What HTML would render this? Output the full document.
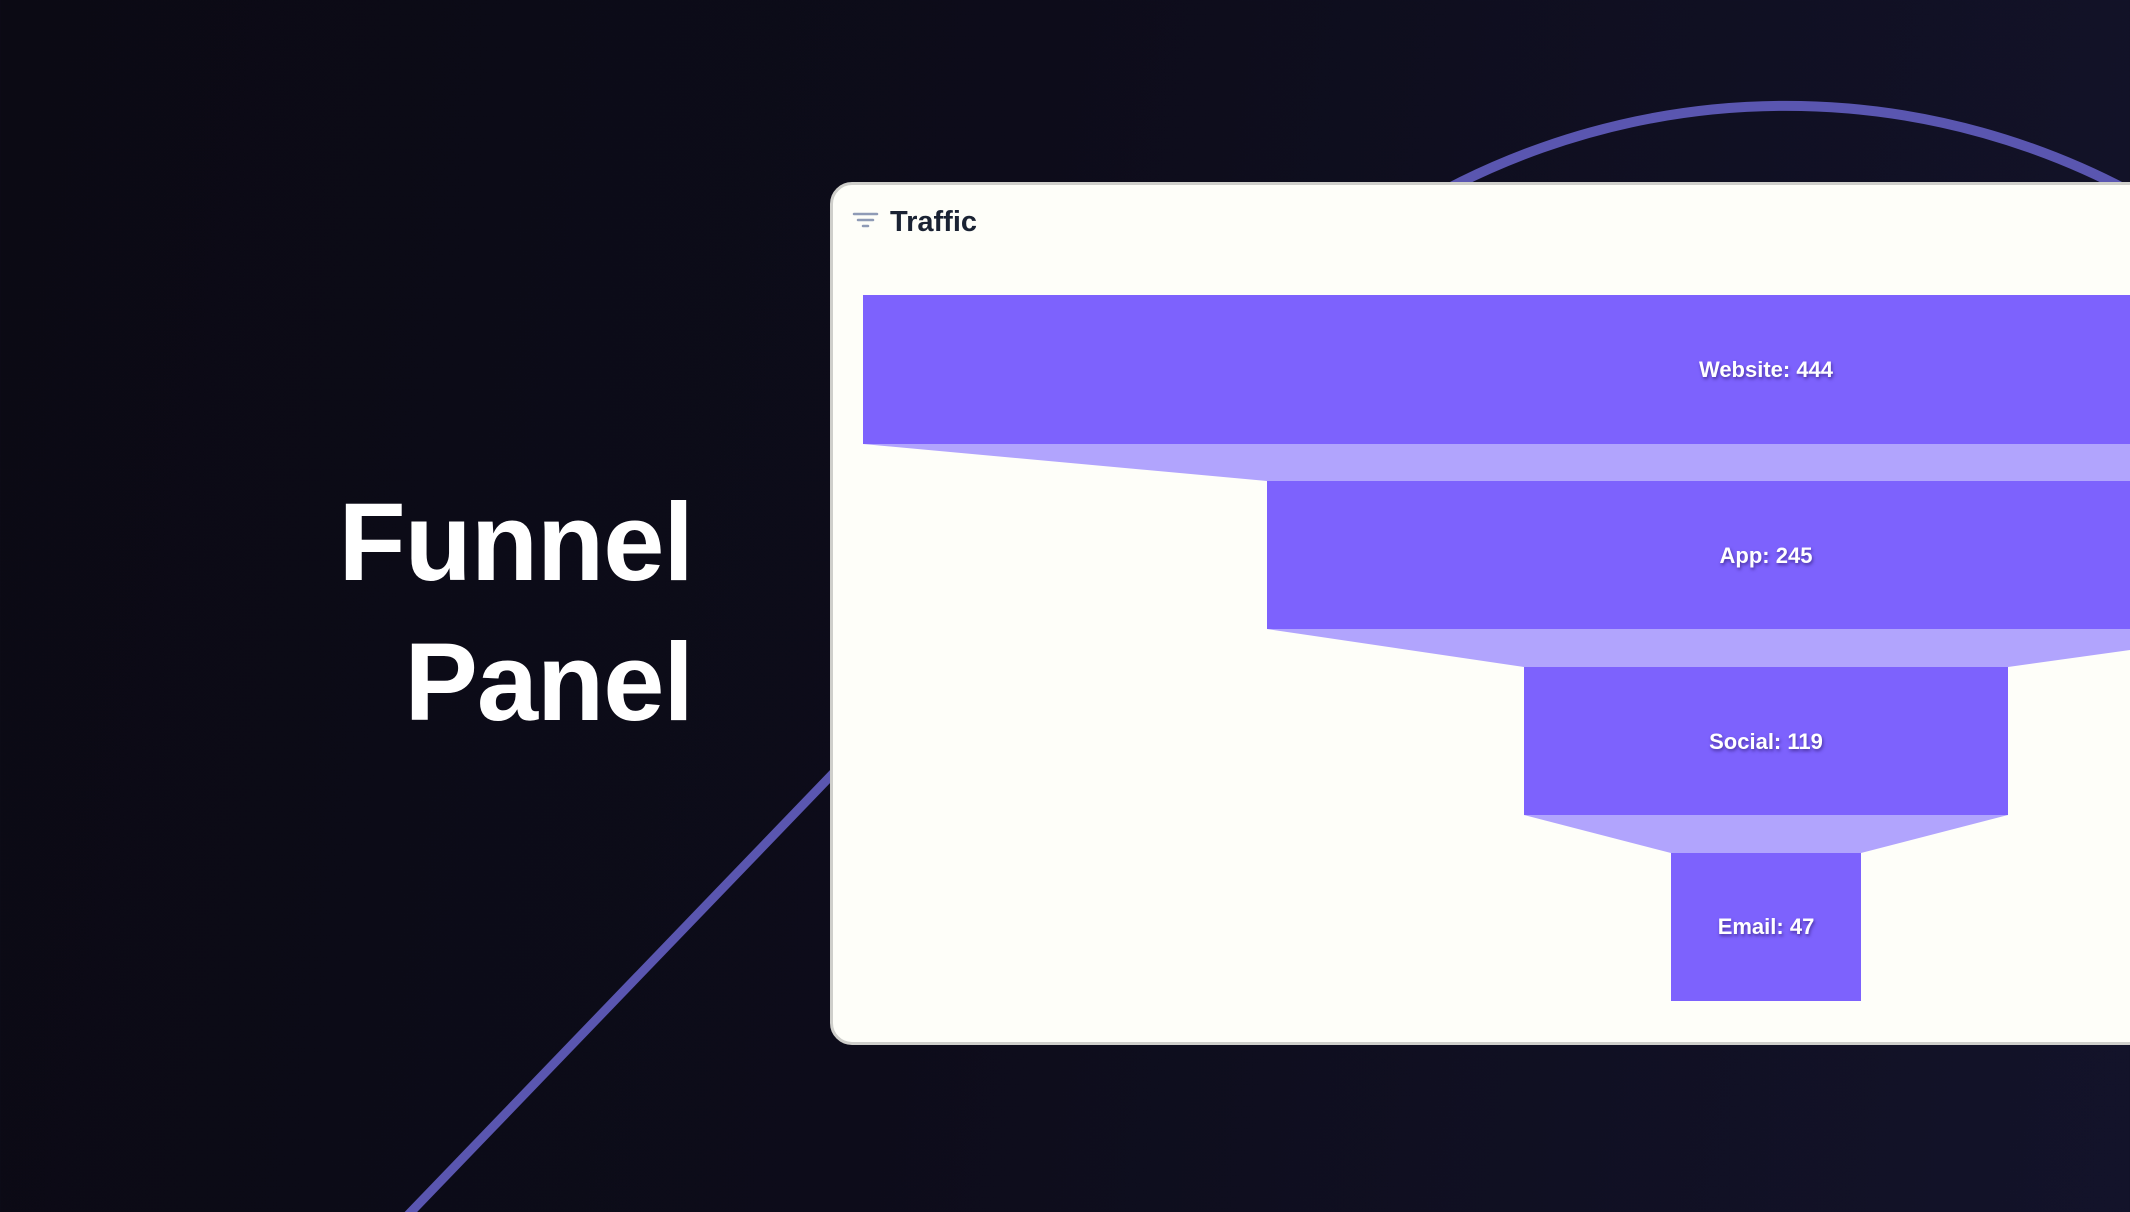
<!DOCTYPE html>
<html><head><meta charset="utf-8"><style>
html,body{margin:0;padding:0}
body{width:2130px;height:1212px;overflow:hidden;position:relative;background:linear-gradient(100deg,#0b0a14 0%,#0d0c1a 45%,#13132a 100%);font-family:"Liberation Sans",sans-serif}
svg{display:block}
.h{position:absolute;right:1437px;color:#fff;font-weight:bold;font-size:110px;letter-spacing:-1px;line-height:1;text-align:right}
.panel{position:absolute;left:830px;top:182px;width:1400px;height:857px;background:#fefef9;border:3px solid #cfcfcb;border-radius:22px;overflow:hidden}
.lbl{position:absolute;left:1766px;transform:translate(-50%,-50%);color:#fff;font-weight:bold;font-size:22px;text-shadow:1px 2px 3px rgba(40,20,100,.6);white-space:nowrap}
</style></head><body>
<svg width="2130" height="1212" style="position:absolute;left:0;top:0">
<line x1="408" y1="1215" x2="1000" y2="600" stroke="#5a56b0" stroke-width="9"/>
<path d="M1337,260 A731 731 0 0 1 2235,260" fill="none" stroke="#5a56b0" stroke-width="10"/>
</svg>
<div class="h" style="top:488px">Funnel</div>
<div class="h" style="top:628px">Panel</div>
<div class="panel"></div>
<svg width="2130" height="1212" style="position:absolute;left:0;top:0">
<g stroke="#8f9bb6" stroke-width="2.5" stroke-linecap="round"><line x1="854" y1="214" x2="877" y2="214"/><line x1="858" y1="220" x2="873" y2="220"/><line x1="863" y1="226" x2="868" y2="226"/></g>
<text x="890" y="231" font-family="Liberation Sans,sans-serif" font-size="29" font-weight="bold" fill="#1a2233">Traffic</text>
<polygon points="863,444 2130,444 2130,481 1267,481" fill="#b1a4fd"/>
<polygon points="1267,629 2130,629 2130,650 2008,667 1524,667" fill="#b1a4fd"/>
<polygon points="1524,815 2008,815 1861,853 1671,853" fill="#b1a4fd"/>
<rect x="863" y="295" width="1267" height="149" fill="#7d62fd"/>
<rect x="1267" y="481" width="863" height="148" fill="#7d62fd"/>
<rect x="1524" y="667" width="484" height="148" fill="#7d62fd"/>
<rect x="1671" y="853" width="190" height="148" fill="#7d62fd"/>
</svg>
<div class="lbl" style="top:370px">Website: 444</div>
<div class="lbl" style="top:556px">App: 245</div>
<div class="lbl" style="top:742px">Social: 119</div>
<div class="lbl" style="top:927px">Email: 47</div>
</body></html>
